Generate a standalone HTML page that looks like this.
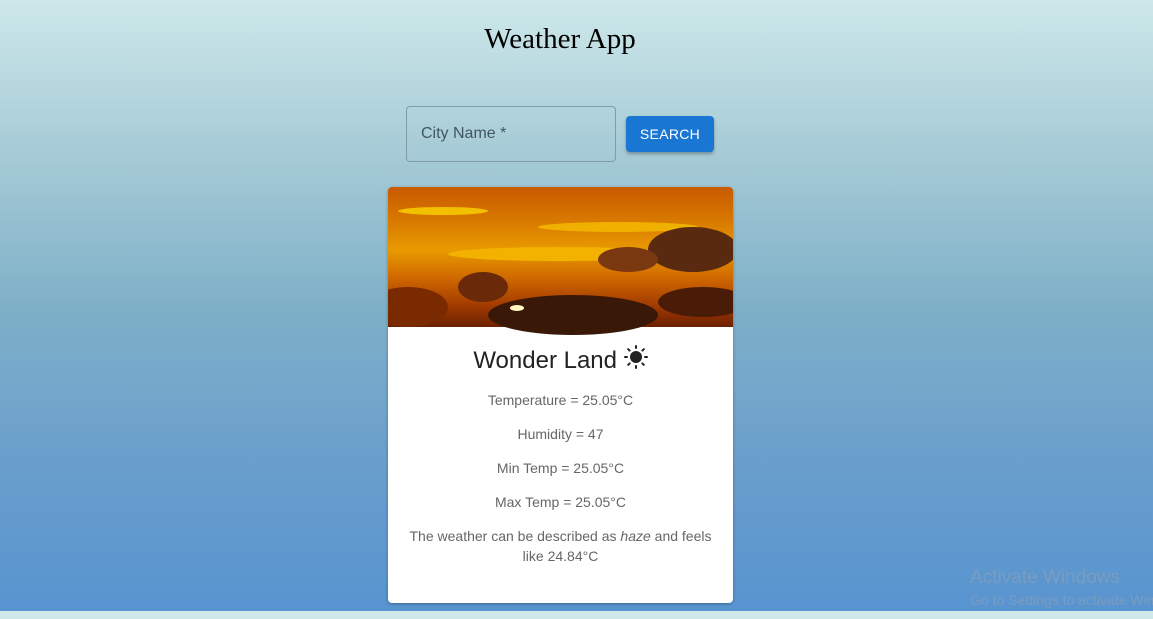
<!DOCTYPE html>
<html><head><style>
*{margin:0;padding:0;box-sizing:border-box}
html,body{width:1153px;height:619px;overflow:hidden}
body{background:#cfe8e9;position:relative;font-family:"Liberation Sans",sans-serif}
.bg{position:absolute;left:0;top:0;width:1153px;height:611px;background:linear-gradient(#cde8ea 0%,#a6cbd6 25%,#7fb0c8 50%,#6a9fcc 75%,#5894d0 100%)}
h1{position:absolute;top:23px;left:0;width:1120px;text-align:center;font-family:"Liberation Serif",serif;font-weight:normal;font-size:29px;color:#000}
.inp{position:absolute;left:406px;top:106px;width:210px;height:56px;border:1px solid #7f9ca8;border-radius:4px;font-size:16px;color:#43565f;padding:18px 0 0 14px}
.btn{position:absolute;left:626px;top:116px;width:88px;height:36px;background:#1976d2;border-radius:4px;color:#fff;font-size:14px;text-align:center;line-height:36px;box-shadow:0 2px 3px rgba(0,0,0,.3);letter-spacing:.3px}
.card{position:absolute;left:388px;top:187px;width:345px;height:416px;background:#fff;border-radius:4px;overflow:hidden;box-shadow:0 1px 3px rgba(0,0,0,.3)}
.img{height:140px;position:relative;background:linear-gradient(#c85a00 0%,#d97a00 25%,#e89a00 45%,#d06800 65%,#a03a00 85%,#6a2000 100%)}
.c{position:absolute;border-radius:50%}
h2{font-weight:normal;font-size:24px;color:#222;text-align:center;margin-top:18px}
p{font-size:14px;color:#666;text-align:center;margin-top:15px;line-height:20px}
.wm{position:absolute;left:970px;top:567px;color:#7a9cc0;font-size:19px}
.wm2{position:absolute;left:970px;top:592px;color:#7a9cc0;font-size:14px;white-space:nowrap}
</style></head><body>
<div class="bg"></div>
<h1>Weather App</h1>
<div class="inp">City Name *</div>
<div class="btn">SEARCH</div>
<div class="card">
<div class="img">
<div class="c" style="left:10px;top:20px;width:90px;height:8px;background:#f2c000"></div>
<div class="c" style="left:150px;top:35px;width:160px;height:10px;background:#f0b000"></div>
<div class="c" style="left:60px;top:60px;width:220px;height:14px;background:#f3b200"></div>
<div class="c" style="left:260px;top:40px;width:90px;height:45px;background:#5a2a10"></div>
<div class="c" style="left:210px;top:60px;width:60px;height:25px;background:#7a3810"></div>
<div class="c" style="left:70px;top:85px;width:50px;height:30px;background:#6a2a0a"></div>
<div class="c" style="left:100px;top:108px;width:170px;height:40px;background:#3a1808"></div>
<div class="c" style="left:270px;top:100px;width:90px;height:30px;background:#4a1c08"></div>
<div class="c" style="left:-20px;top:100px;width:80px;height:40px;background:#7a2a00"></div>
<div class="c" style="left:122px;top:118px;width:14px;height:6px;background:#fff6c0"></div>
</div>
<h2>Wonder Land <svg width="24" height="24" viewBox="0 0 24 24" style="vertical-align:-1px"><circle cx="12" cy="12" r="6" fill="#222"/><g stroke="#222" stroke-width="2" stroke-linecap="round"><path d="M12 1v2M12 21v2M1 12h2M21 12h2M4.2 4.2l1.4 1.4M18.4 18.4l1.4 1.4M4.2 19.8l1.4-1.4M18.4 5.6l1.4-1.4"/></g></svg></h2>
<p>Temperature = 25.05°C</p>
<p style="margin-top:14px">Humidity = 47</p>
<p style="margin-top:14px">Min Temp = 25.05°C</p>
<p style="margin-top:14px">Max Temp = 25.05°C</p>
<p style="margin-top:14px;padding:0 18px">The weather can be described as <i>haze</i> and feels like 24.84°C</p>
</div>
<div class="wm">Activate Windows</div>
<div class="wm2">Go to Settings to activate Windows.</div>
</body></html>
